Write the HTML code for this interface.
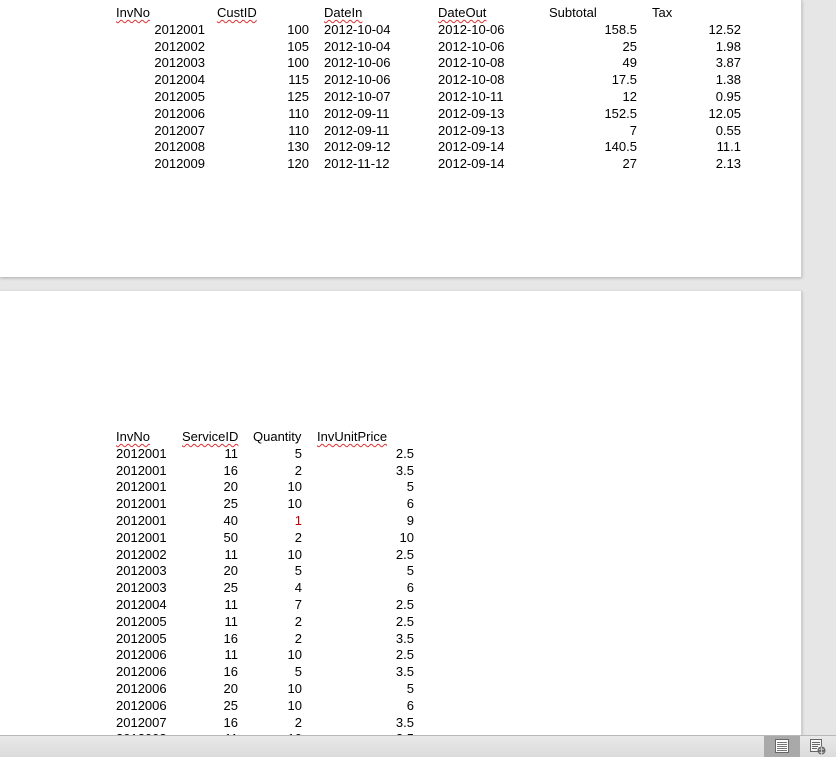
<!DOCTYPE html>
<html><head><style>
html,body{margin:0;padding:0;}
body{width:836px;height:756px;background:#e6e6e6;position:relative;overflow:hidden;font-family:"Liberation Sans",sans-serif;font-size:13px;color:#000;}
.page{position:absolute;left:0;width:801px;background:#fff;box-shadow:0 1px 3px rgba(0,0,0,.25);border-right:1px solid #cfcfcf;overflow:hidden;}
.r{position:absolute;left:0;height:17px;line-height:17px;width:800px;}
.r span{position:absolute;top:0;white-space:nowrap;}
.w{text-decoration:underline wavy #e03030;text-decoration-thickness:1px;text-underline-offset:2px;}
.status{position:absolute;left:0;top:735px;width:836px;height:21px;background:linear-gradient(#e8e8e8,#dcdcdc);border-top:1px solid #b8b8b8;}
</style></head><body>
<div class="page" style="top:0;height:277px;" id="p1">
<div class="r" style="top:4px"><span class="w" style="left:116px">InvNo</span><span class="w" style="left:217px">CustID</span><span class="w" style="left:324px">DateIn</span><span class="w" style="left:438px">DateOut</span><span style="left:549px">Subtotal</span><span style="left:652px">Tax</span></div>
<div class="r" style="top:20.8px"><span style="right:595px">2012001</span><span style="right:491px">100</span><span style="left:324px">2012-10-04</span><span style="left:438px">2012-10-06</span><span style="right:163px">158.5</span><span style="right:59px">12.52</span></div>
<div class="r" style="top:37.6px"><span style="right:595px">2012002</span><span style="right:491px">105</span><span style="left:324px">2012-10-04</span><span style="left:438px">2012-10-06</span><span style="right:163px">25</span><span style="right:59px">1.98</span></div>
<div class="r" style="top:54.4px"><span style="right:595px">2012003</span><span style="right:491px">100</span><span style="left:324px">2012-10-06</span><span style="left:438px">2012-10-08</span><span style="right:163px">49</span><span style="right:59px">3.87</span></div>
<div class="r" style="top:71.2px"><span style="right:595px">2012004</span><span style="right:491px">115</span><span style="left:324px">2012-10-06</span><span style="left:438px">2012-10-08</span><span style="right:163px">17.5</span><span style="right:59px">1.38</span></div>
<div class="r" style="top:88px"><span style="right:595px">2012005</span><span style="right:491px">125</span><span style="left:324px">2012-10-07</span><span style="left:438px">2012-10-11</span><span style="right:163px">12</span><span style="right:59px">0.95</span></div>
<div class="r" style="top:104.8px"><span style="right:595px">2012006</span><span style="right:491px">110</span><span style="left:324px">2012-09-11</span><span style="left:438px">2012-09-13</span><span style="right:163px">152.5</span><span style="right:59px">12.05</span></div>
<div class="r" style="top:121.6px"><span style="right:595px">2012007</span><span style="right:491px">110</span><span style="left:324px">2012-09-11</span><span style="left:438px">2012-09-13</span><span style="right:163px">7</span><span style="right:59px">0.55</span></div>
<div class="r" style="top:138.4px"><span style="right:595px">2012008</span><span style="right:491px">130</span><span style="left:324px">2012-09-12</span><span style="left:438px">2012-09-14</span><span style="right:163px">140.5</span><span style="right:59px">11.1</span></div>
<div class="r" style="top:155.2px"><span style="right:595px">2012009</span><span style="right:491px">120</span><span style="left:324px">2012-11-12</span><span style="left:438px">2012-09-14</span><span style="right:163px">27</span><span style="right:59px">2.13</span></div>
</div>
<div class="page" style="top:291px;height:460px;">
<div class="r" style="top:137px"><span class="w" style="left:116px">InvNo</span><span class="w" style="left:182px">ServiceID</span><span style="left:253px">Quantity</span><span class="w" style="left:317px">InvUnitPrice</span></div>
<div class="r" style="top:153.8px"><span style="left:116px">2012001</span><span style="right:562px">11</span><span style="right:498px">5</span><span style="right:386px">2.5</span></div>
<div class="r" style="top:170.6px"><span style="left:116px">2012001</span><span style="right:562px">16</span><span style="right:498px">2</span><span style="right:386px">3.5</span></div>
<div class="r" style="top:187.4px"><span style="left:116px">2012001</span><span style="right:562px">20</span><span style="right:498px">10</span><span style="right:386px">5</span></div>
<div class="r" style="top:204.2px"><span style="left:116px">2012001</span><span style="right:562px">25</span><span style="right:498px">10</span><span style="right:386px">6</span></div>
<div class="r" style="top:221px"><span style="left:116px">2012001</span><span style="right:562px">40</span><span style="right:498px;color:#c00000">1</span><span style="right:386px">9</span></div>
<div class="r" style="top:237.8px"><span style="left:116px">2012001</span><span style="right:562px">50</span><span style="right:498px">2</span><span style="right:386px">10</span></div>
<div class="r" style="top:254.6px"><span style="left:116px">2012002</span><span style="right:562px">11</span><span style="right:498px">10</span><span style="right:386px">2.5</span></div>
<div class="r" style="top:271.4px"><span style="left:116px">2012003</span><span style="right:562px">20</span><span style="right:498px">5</span><span style="right:386px">5</span></div>
<div class="r" style="top:288.2px"><span style="left:116px">2012003</span><span style="right:562px">25</span><span style="right:498px">4</span><span style="right:386px">6</span></div>
<div class="r" style="top:305px"><span style="left:116px">2012004</span><span style="right:562px">11</span><span style="right:498px">7</span><span style="right:386px">2.5</span></div>
<div class="r" style="top:321.8px"><span style="left:116px">2012005</span><span style="right:562px">11</span><span style="right:498px">2</span><span style="right:386px">2.5</span></div>
<div class="r" style="top:338.6px"><span style="left:116px">2012005</span><span style="right:562px">16</span><span style="right:498px">2</span><span style="right:386px">3.5</span></div>
<div class="r" style="top:355.4px"><span style="left:116px">2012006</span><span style="right:562px">11</span><span style="right:498px">10</span><span style="right:386px">2.5</span></div>
<div class="r" style="top:372.2px"><span style="left:116px">2012006</span><span style="right:562px">16</span><span style="right:498px">5</span><span style="right:386px">3.5</span></div>
<div class="r" style="top:389px"><span style="left:116px">2012006</span><span style="right:562px">20</span><span style="right:498px">10</span><span style="right:386px">5</span></div>
<div class="r" style="top:405.8px"><span style="left:116px">2012006</span><span style="right:562px">25</span><span style="right:498px">10</span><span style="right:386px">6</span></div>
<div class="r" style="top:422.6px"><span style="left:116px">2012007</span><span style="right:562px">16</span><span style="right:498px">2</span><span style="right:386px">3.5</span></div>
<div class="r" style="top:439.4px"><span style="left:116px">2012008</span><span style="right:562px">11</span><span style="right:498px">10</span><span style="right:386px">2.5</span></div>
</div>
<div class="status">
<div style="position:absolute;left:764px;top:0;width:36px;height:21px;background:#a9a9a9;"></div>
<svg style="position:absolute;left:775px;top:3px" width="14" height="14" viewBox="0 0 14 14"><rect x="0.5" y="0.5" width="13" height="13" fill="#fff" stroke="#666"/><path d="M2 3.5h10M2 5.5h10M2 7.5h10M2 9.5h10M2 11.5h10" stroke="#777" stroke-width="1"/></svg>
<svg style="position:absolute;left:810px;top:3px" width="16" height="16" viewBox="0 0 16 16"><rect x="0.5" y="0.5" width="11" height="12" fill="#f4f4f4" stroke="#666"/><path d="M2 3.5h8M2 5.5h8M2 7.5h6M2 9.5h5" stroke="#666"/><circle cx="11.5" cy="11.5" r="4" fill="#666"/><path d="M9 10.5q2.5-1 5 0M9.5 13q2 1 4 0M11.5 7.5v8" stroke="#ddd" stroke-width="0.8" fill="none"/></svg>
</div>
</body></html>
